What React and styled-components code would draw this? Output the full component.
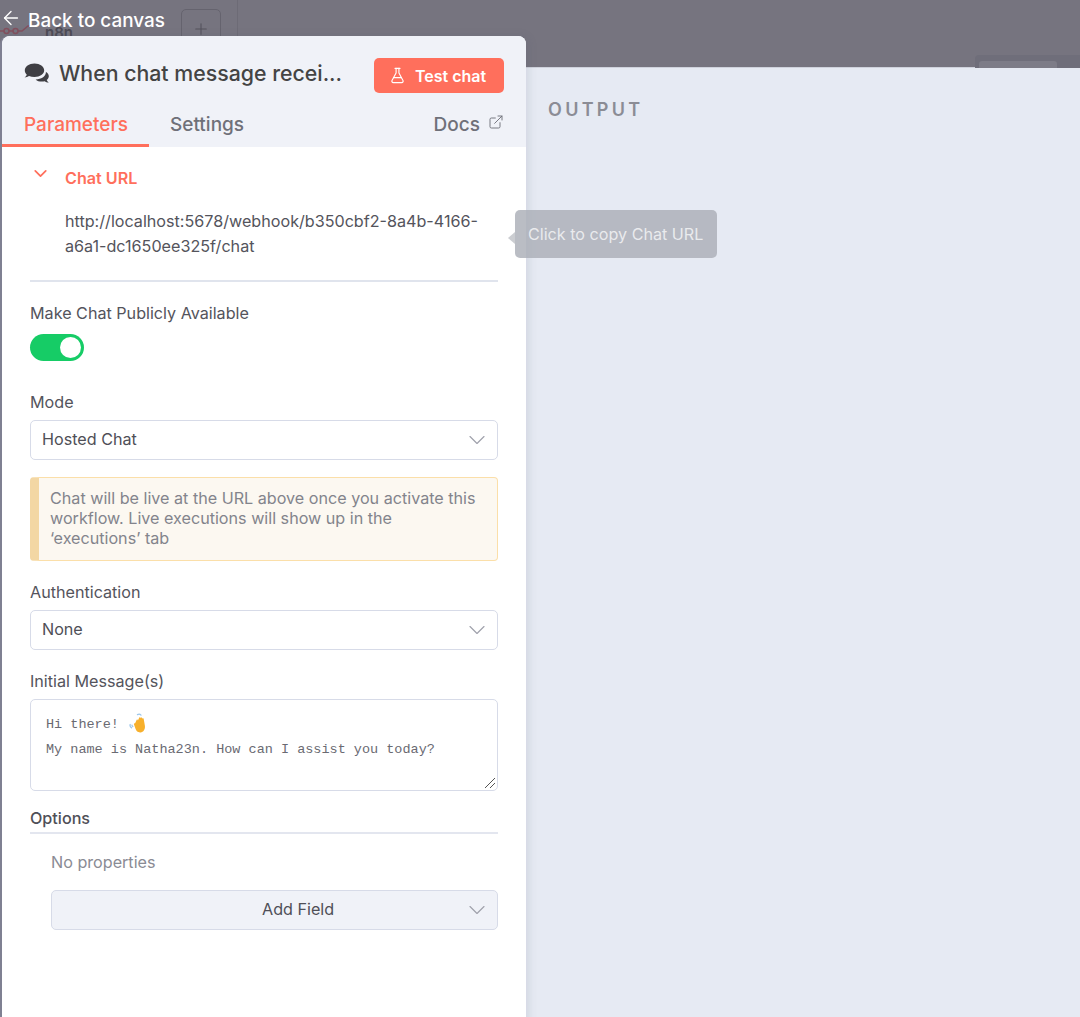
import React from "react";
import styled, { createGlobalStyle } from "styled-components";
import { ChevronDown, FlaskConical, ExternalLink, ArrowLeft, Plus } from "lucide-react";

const GlobalStyle = createGlobalStyle`
  html, body { margin: 0; padding: 0; height: 100%; }
  body { font-family: Inter, "Noto Sans", sans-serif; background: #e6eaf3; }
  * { box-sizing: border-box; }
`;

const Page = styled.div`
  position: relative;
  width: 1080px;
  height: 1017px;
  overflow: hidden;
  display: flex;
  flex-direction: column;
  background: #e6eaf3;
`;

const CanvasStrip = styled.div`
  position: relative;
  height: 68px;
  flex: none;
  background: #76747f;
  border-bottom: 1px solid #cfd2dc;
`;

const StripDivider = styled.div`
  position: absolute;
  left: 237px;
  top: 0;
  bottom: 0;
  width: 1px;
  background: #6d6b76;
`;

const AddBox = styled.div`
  position: absolute;
  left: 181px;
  top: 9px;
  width: 40px;
  height: 40px;
  border: 1px solid #65636e;
  border-radius: 5px;
  display: flex;
  align-items: center;
  justify-content: center;
  color: #55535d;
`;

const Ghost = styled.div`
  position: absolute;
  left: 975px;
  top: 55px;
  right: 0;
  height: 13px;
  background: #6f6e7a;
  border-radius: 4px 0 0 0;
  &::after {
    content: "";
    position: absolute;
    left: 4px;
    top: 6px;
    width: 78px;
    height: 7px;
    background: #7d7c87;
    border-radius: 3px 3px 0 0;
  }
`;

const GhostLogo = styled.span`
  position: absolute;
  left: 45px;
  top: 27px;
  font-size: 15px;
  font-weight: 600;
  line-height: 12px;
  color: #4d4b55;
`;

const GhostNodes = styled.svg`
  position: absolute;
  left: 0;
  top: 22px;
`;

const BackLink = styled.div`
  position: absolute;
  left: 0;
  top: 13px;
  display: flex;
  align-items: center;
  gap: 6px;
  color: #fff;
  font-size: 18.9px;
  font-weight: 500;
  line-height: 14px;
  z-index: 3;
  svg { margin-top: -6px; }
`;

const OutputArea = styled.div`
  flex: 1;
  padding: 31px 0 0 548px;
`;

const OutputTitle = styled.div`
  font-size: 18px;
  font-weight: 600;
  letter-spacing: 3.3px;
  color: #8b8c95;
  line-height: 22px;
`;

const Panel = styled.div`
  position: absolute;
  left: 2px;
  top: 36px;
  bottom: -10px;
  width: 524px;
  background: #fff;
  border-radius: 8px 8px 0 0;
  box-shadow: -2px 0 0 #7f8092, 3px 0 9px rgba(80, 85, 110, 0.13);
  display: flex;
  flex-direction: column;
  z-index: 2;
`;

const PanelHead = styled.div`
  background: #f0f2f8;
  border-radius: 8px 8px 0 0;
  height: 111px;
  flex: none;
  display: flex;
  flex-direction: column;
  justify-content: space-between;
`;

const TitleRow = styled.div`
  display: flex;
  align-items: center;
  justify-content: space-between;
  padding: 22px 22px 0 22px;
`;

const TitleGroup = styled.div`
  display: flex;
  align-items: center;
  gap: 9px;
  margin-bottom: 5px;
`;

const TitleText = styled.div`
  font-size: 21.3px;
  font-weight: 500;
  color: #444;
  line-height: 30px;
  white-space: nowrap;
`;

const TestButton = styled.div`
  width: 130px;
  height: 35px;
  background: #ff6f5c;
  border-radius: 5px;
  color: #fff;
  font-size: 16px;
  font-weight: 600;
  display: flex;
  align-items: center;
  justify-content: center;
  gap: 9px;
  svg { margin-left: -3px; }
`;

const Tabs = styled.div`
  display: flex;
  align-items: flex-end;
  height: 38px;
`;

const Tab = styled.div`
  height: 38px;
  width: ${(p) => p.$width}px;
  padding-left: ${(p) => p.$pad}px;
  padding-top: 1px;
  font-size: 19px;
  line-height: 30px;
  font-weight: 500;
  color: ${(p) => (p.$active ? "#ff6f5c" : "#6f7079")};
  border-bottom: 3px solid ${(p) => (p.$active ? "#ff6f5c" : "transparent")};
`;

const DocsLink = styled.div`
  margin-left: auto;
  padding: 1px 22px 0 0;
  height: 38px;
  display: flex;
  align-items: flex-start;
  gap: 8px;
  font-size: 19px;
  line-height: 30px;
  font-weight: 500;
  color: #6f7079;
  svg { margin-top: 4px; }
`;

const Body = styled.div`
  flex: 1;
  padding: 0 28px;
  display: flex;
  flex-direction: column;
`;

const UrlHeader = styled.div`
  display: flex;
  align-items: flex-start;
  height: 62px;
  padding-top: 19px;
  color: #ff6f5c;
  font-size: 16.15px;
  font-weight: 600;
  line-height: 24px;
  svg { margin: -3px 0 0 0; }
`;

const UrlLabel = styled.span`
  margin-left: 14px;
`;

const UrlValue = styled.div`
  padding-left: 35px;
  font-size: 16.15px;
  line-height: 25px;
  color: #54545c;
  height: 71px;
`;

const Rule = styled.div`
  height: 2px;
  background: #e0e4ed;
  flex: none;
`;

const FieldLabel = styled.div`
  font-size: 16.15px;
  font-weight: 400;
  line-height: 22px;
  color: #54545c;
  margin-top: ${(p) => p.$top}px;
`;

const ToggleTrack = styled.div`
  width: 54px;
  height: 27px;
  margin-top: 10px;
  border-radius: 14px;
  background: #16cc66;
  padding: 3px;
  display: flex;
  justify-content: flex-end;
`;

const ToggleKnob = styled.div`
  width: 21px;
  height: 21px;
  border-radius: 50%;
  background: #fff;
`;

const Select = styled.div`
  position: relative;
  height: 40px;
  margin-top: ${(p) => p.$top || 7}px;
  margin-left: ${(p) => p.$indent || 0}px;
  border: 1px solid #d7dbe8;
  border-radius: 5px;
  background: ${(p) => (p.$muted ? "#f0f2f8" : "#fff")};
  font-size: 16.15px;
  line-height: 36px;
  color: #4f4f57;
  padding: 0 0 2px ${(p) => (p.$muted ? 210 : 11)}px;
  display: flex;
  align-items: center;
`;

const SelectChevron = styled(ChevronDown)`
  position: absolute;
  right: 6px;
  top: 5px;
  color: #a0a2ac;
`;

const Notice = styled.div`
  margin-top: 17px;
  height: 84px;
  flex: none;
  background: #fcf8f1;
  border: 1px solid #fbdfa9;
  border-left: 9px solid #f3d7a4;
  border-radius: 4px;
  padding: 10px 18px 0 11px;
  font-size: 16.15px;
  line-height: 20px;
  color: #83848c;
`;

const TextArea = styled.div`
  position: relative;
  height: 92px;
  margin-top: 7px;
  border: 1px solid #d7dbe8;
  border-radius: 5px;
  padding: 13px 15px 0 15px;
  font-family: "Liberation Mono", monospace;
  font-size: 13.5px;
  line-height: 24.5px;
  color: #6a6a72;
  white-space: pre;
`;

const EmojiLine = styled.div`
  display: flex;
  align-items: center;
  height: 24.5px;
  gap: 10px;
  svg { margin-top: -4px; }
`;

const ResizeGrip = styled.svg`
  position: absolute;
  right: 1px;
  bottom: 1px;
`;

const OptionsLabel = styled.div`
  margin-top: 15px;
  font-size: 16.15px;
  line-height: 24px;
  font-weight: 500;
  color: #4f4f57;
  padding-bottom: 2px;
  border-bottom: 2px solid #e3e6ef;
`;

const EmptyNote = styled.div`
  margin: 16px 0 0 21px;
  font-size: 16.15px;
  line-height: 24px;
  color: #8a8b94;
`;

const Tooltip = styled.div`
  position: absolute;
  left: 515px;
  top: 210px;
  width: 202px;
  height: 48px;
  background: rgba(171, 174, 183, 0.82);
  border-radius: 5px;
  color: rgba(255, 255, 255, 0.72);
  font-size: 16.15px;
  line-height: 48px;
  padding-left: 13px;
  z-index: 4;
  white-space: nowrap;
  &::before {
    content: "";
    position: absolute;
    left: -7px;
    top: 22px;
    border-top: 6px solid transparent;
    border-bottom: 6px solid transparent;
    border-right: 7px solid rgba(190, 192, 198, 0.8);
  }
`;

const ChatBubbles = () => (
  <svg width="26" height="22" viewBox="0 0 26 22" fill="#3f3f44">
    <path d="M10.5 1.5C5 1.5.8 4.6.8 8.4c0 1.6.8 3.1 2 4.3-.4 1.1-1.3 2-2.3 2.7 1.7 0 3.3-.6 4.5-1.4 1.6.6 3.4.9 5.5.9 5.5 0 9.7-3 9.7-6.5 0-3.8-4.2-6.9-9.7-6.9z" />
    <path d="M21.8 9.2c.1.5.2 1 .1 1.4-.3 4-4.9 6.9-10.3 6.8 1.5 1.5 3.7 2.2 6.4 2.2.9 0 1.8-.1 2.6-.4 1 .8 2.6 1.4 4.2 1.4-.9-.7-1.7-1.5-2.1-2.6 1.3-1 2.1-2.4 2.1-3.8 0-1.8-1.1-3.4-3-4.5z" />
  </svg>
);

const WavingHand = () => (
  <svg width="18" height="20" viewBox="0 0 18 20">
    <path d="M6 10.5 7.6 7c.3-.8 1.4-.5 1.3.4l1.3-2.6c.4-.8 1.5-.4 1.3.5l.2-.3c.5-.8 1.6-.3 1.4.6l.2-.1c.5-.7 1.5-.3 1.4.6l1.2 6.6c.5 3.6-1.4 6.4-4.4 6.7-2.6.2-4.2-1.2-5-3.6L5 11.6c-.3-.9.6-1.7 1-1.1z" fill="#f7b02c" />
    <path d="M8.5 1.6c1.2-.7 2.6-.4 3.5.5M1.2 11.5c-.4 1.3.2 2.7 1.4 3.3M3 12.2c0 .6.3 1 .8 1.3" stroke="#9cc6ea" strokeWidth="1.3" fill="none" strokeLinecap="round" />
  </svg>
);

const fields = { mode: "Hosted Chat", auth: "None" };

const App = () => {
  return (
    <Page>
      <GlobalStyle />
      <CanvasStrip>
        <StripDivider />
        <GhostNodes width="40" height="14" viewBox="0 0 40 14">
          <path d="M0 9h4M9 9h4M18 9h4l6-5h8" stroke="#82505e" strokeWidth="1.5" fill="none" />
          <circle cx="6.5" cy="9" r="2.5" stroke="#82505e" strokeWidth="1.5" fill="none" />
          <circle cx="15.5" cy="9" r="2.5" stroke="#82505e" strokeWidth="1.5" fill="none" />
        </GhostNodes>
        <GhostLogo>n8n</GhostLogo>
        <AddBox>
          <Plus size={18} strokeWidth={1.5} />
        </AddBox>
        <Ghost />
      </CanvasStrip>
      <OutputArea>
        <OutputTitle>OUTPUT</OutputTitle>
      </OutputArea>

      <BackLink>
        <ArrowLeft size={22} strokeWidth={1.5} />
        Back to canvas
      </BackLink>

      <Panel>
        <PanelHead>
          <TitleRow>
            <TitleGroup>
              <ChatBubbles />
              <TitleText>When chat message recei...</TitleText>
            </TitleGroup>
            <TestButton>
              <FlaskConical size={17} strokeWidth={1.6} />
              Test chat
            </TestButton>
          </TitleRow>
          <Tabs>
            <Tab $active $width={147} $pad={22}>Parameters</Tab>
            <Tab $width={120} $pad={21}>Settings</Tab>
            <DocsLink>
              Docs
              <ExternalLink size={16} strokeWidth={1.4} />
            </DocsLink>
          </Tabs>
        </PanelHead>

        <Body>
          <UrlHeader>
            <ChevronDown size={21} strokeWidth={2} />
            <UrlLabel>Chat URL</UrlLabel>
          </UrlHeader>
          <UrlValue>
            http://localhost:5678/webhook/b350cbf2-8a4b-4166-
            <br />
            a6a1-dc1650ee325f/chat
          </UrlValue>
          <Rule />

          <FieldLabel $top={20}>Make Chat Publicly Available</FieldLabel>
          <ToggleTrack>
            <ToggleKnob />
          </ToggleTrack>

          <FieldLabel $top={30}>Mode</FieldLabel>
          <Select>
            {fields.mode}
            <SelectChevron size={28} strokeWidth={1} />
          </Select>

          <Notice>
            Chat will be live at the URL above once you activate this workflow. Live executions will show up in the ‘executions’ tab
          </Notice>

          <FieldLabel $top={20}>Authentication</FieldLabel>
          <Select>
            {fields.auth}
            <SelectChevron size={28} strokeWidth={1} />
          </Select>

          <FieldLabel $top={20}>Initial Message(s)</FieldLabel>
          <TextArea>
            <EmojiLine>
              Hi there!
              <WavingHand />
            </EmojiLine>
            My name is Natha23n. How can I assist you today?
            <ResizeGrip width="12" height="12" viewBox="0 0 12 12">
              <path d="M1 11 11 1M6 11l5-5" stroke="#555" strokeWidth="1" fill="none" />
            </ResizeGrip>
          </TextArea>

          <OptionsLabel>Options</OptionsLabel>
          <EmptyNote>No properties</EmptyNote>
          <Select $muted $indent={21} $top={16}>
            Add Field
            <SelectChevron size={28} strokeWidth={1} />
          </Select>
        </Body>
      </Panel>

      <Tooltip>Click to copy Chat URL</Tooltip>
    </Page>
  );
};

export default App;
